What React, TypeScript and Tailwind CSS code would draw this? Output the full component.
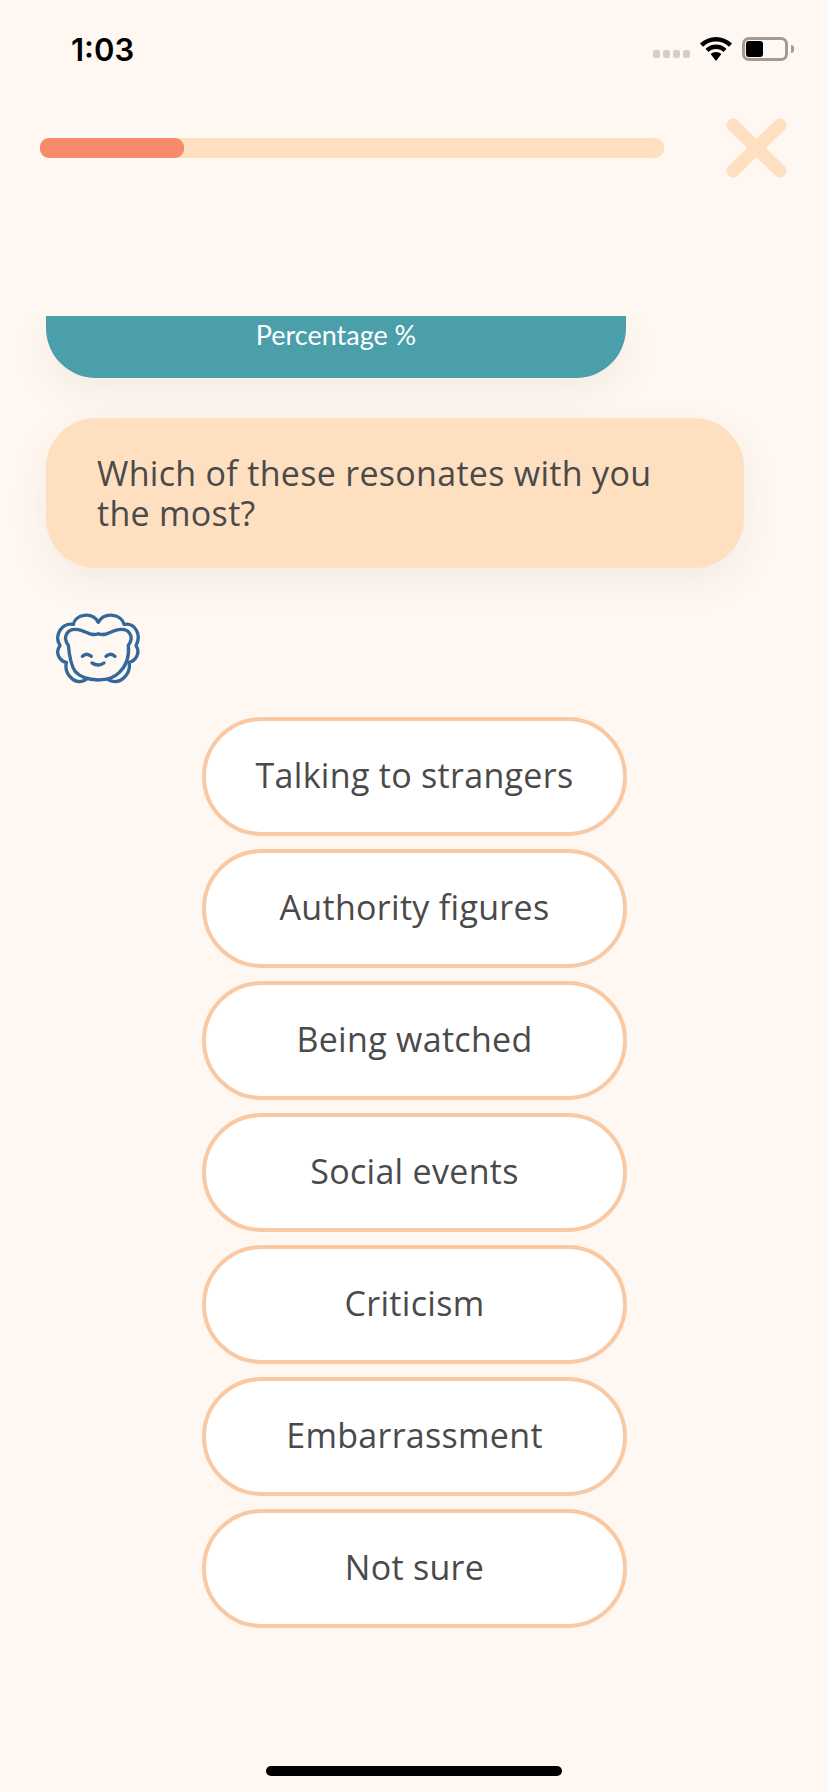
const options = [
  "Talking to strangers",
  "Authority figures",
  "Being watched",
  "Social events",
  "Criticism",
  "Embarrassment",
  "Not sure",
];

const Mascot = () => (
  <svg
    width="87"
    height="76"
    viewBox="72 62 261 228"
    fill="none"
    stroke="#33689a"
    strokeWidth="10"
    strokeLinecap="round"
    strokeLinejoin="round"
  >
    {/* face */}
    <path d="M115 165C96 140 112 112 145 118C170 122 185 140 205 130C225 140 240 122 265 118C298 112 314 140 295 165C298 195 290 225 268 246C252 262 236 268 205 269C174 268 150 260 136 244C122 226 118 195 115 165Z" />
    {/* hair */}
    <path d="M130 102C136 72 186 62 205 96C224 62 276 72 282 102C314 96 336 132 318 166C332 186 318 212 297 216C304 248 272 288 235 268" />
    <path d="M130 102C98 96 70 132 90 166C74 186 88 212 109 216C102 248 132 288 168 268" />
    <path d="M157 198Q170 185 184 198" />
    <path d="M228 198Q242 185 255 198" />
    <path d="M186 218Q205 230 222 218" />
  </svg>
);

const App = () => {
  return (
    <div className="w-[828px] h-[1792px] bg-[#fff7f1] flex flex-col overflow-hidden relative font-['Open_Sans',sans-serif]">
      {/* status bar */}
      <div className="h-[100px] flex items-start justify-between pl-[71px] pr-[34px] pt-[30px]">
        <span className="font-['Inter',sans-serif] font-semibold text-[31px] leading-[40px] text-black">
          1:03
        </span>
        <div className="flex items-center mt-[7px]">
          <div className="flex gap-[3px] mt-[10px] mr-[10px]">
            <div className="w-[7px] h-[8px] rounded-[2px] bg-[#d4cdc8]" />
            <div className="w-[7px] h-[8px] rounded-[2px] bg-[#d4cdc8]" />
            <div className="w-[7px] h-[8px] rounded-[2px] bg-[#d4cdc8]" />
            <div className="w-[7px] h-[8px] rounded-[2px] bg-[#d4cdc8]" />
          </div>
          <svg width="32" height="24" viewBox="0 0 32 24" fill="black">
            <path d="M16 0C10 0 4.500 2.300 0 6.500L3 9.700C6.600 6.400 11 4.500 16 4.500C21 4.500 25.400 6.400 29 9.700L32 6.500C27.500 2.300 22 0 16 0Z" />
            <path d="M16 7.500C12 7.500 8.500 9 5.500 11.700L8.500 14.900C10.600 13 13 12 16 12C19 12 21.400 13 23.500 14.900L26.500 11.700C23.500 9 20 7.500 16 7.500Z" />
            <path d="M16 15C14 15 12 15.700 10.600 17L16 24L21.400 17C20 15.700 18 15 16 15Z" />
          </svg>
          <div className="w-[46px] h-[24px] ml-[10px] border-[3px] border-[#a39a94] rounded-[7px] p-[1px]">
            <div className="w-[17px] h-full bg-black rounded-[3px]" />
          </div>
          <div className="w-[3px] h-[8px] ml-[3px] bg-[#a39a94] rounded-r-[3px]" />
        </div>
      </div>

      {/* progress row */}
      <div className="h-[216px] flex items-start pl-[40px]">
        <div className="w-[624px] h-[20px] mt-[38px] bg-[#fee0c0] rounded-[9px]">
          <div className="w-[144px] h-full bg-[#f68a6b] rounded-[9px]" />
        </div>
        <svg
          className="ml-[62px] mt-[18px]"
          width="61"
          height="60"
          viewBox="0 0 61 60"
          stroke="#fee0c0"
          strokeWidth="13"
          strokeLinecap="round"
        >
          <path d="M7 7L54 53M54 7L7 53" />
        </svg>
      </div>

      {/* chat */}
      <div className="flex-1 overflow-hidden flex flex-col pl-[46px]">
        <div className="w-[580px] h-[62px] shrink-0 bg-[#4a9fab] rounded-b-[50px] shadow-[0_14px_40px_rgba(90,70,40,0.07)] flex justify-center pt-[1px]">
          <span className="font-['Lato',sans-serif] text-[27px] leading-[36px] text-white">
            Percentage %
          </span>
        </div>
        <div className="w-[698px] h-[150px] shrink-0 mt-[40px] bg-[#fee0c0] rounded-[50px] shadow-[0_14px_40px_rgba(90,70,40,0.07)] pl-[51px] pt-[35px]">
          <p className="w-[590px] text-[34px] leading-[40px] tracking-[0.3px] text-[#4a4a4a]">
            Which of these resonates with you the most?
          </p>
        </div>
        <div className="mt-[43px] ml-[8px]">
          <Mascot />
        </div>
        <div className="mt-[30px] ml-[156px] flex flex-col gap-[13px]">
          {options.map((label) => (
            <button
              key={label}
              className="w-[425px] h-[119px] pb-[2px] bg-white border-[4px] border-[#f9c9a4] rounded-[60px] text-[34px] tracking-[0.3px] text-[#4a4a4a]"
            >
              {label}
            </button>
          ))}
        </div>
      </div>

      {/* home indicator */}
      <div className="absolute bottom-[16px] left-[266px] w-[296px] h-[10px] rounded-[5px] bg-black" />
    </div>
  );
};

export default App;
